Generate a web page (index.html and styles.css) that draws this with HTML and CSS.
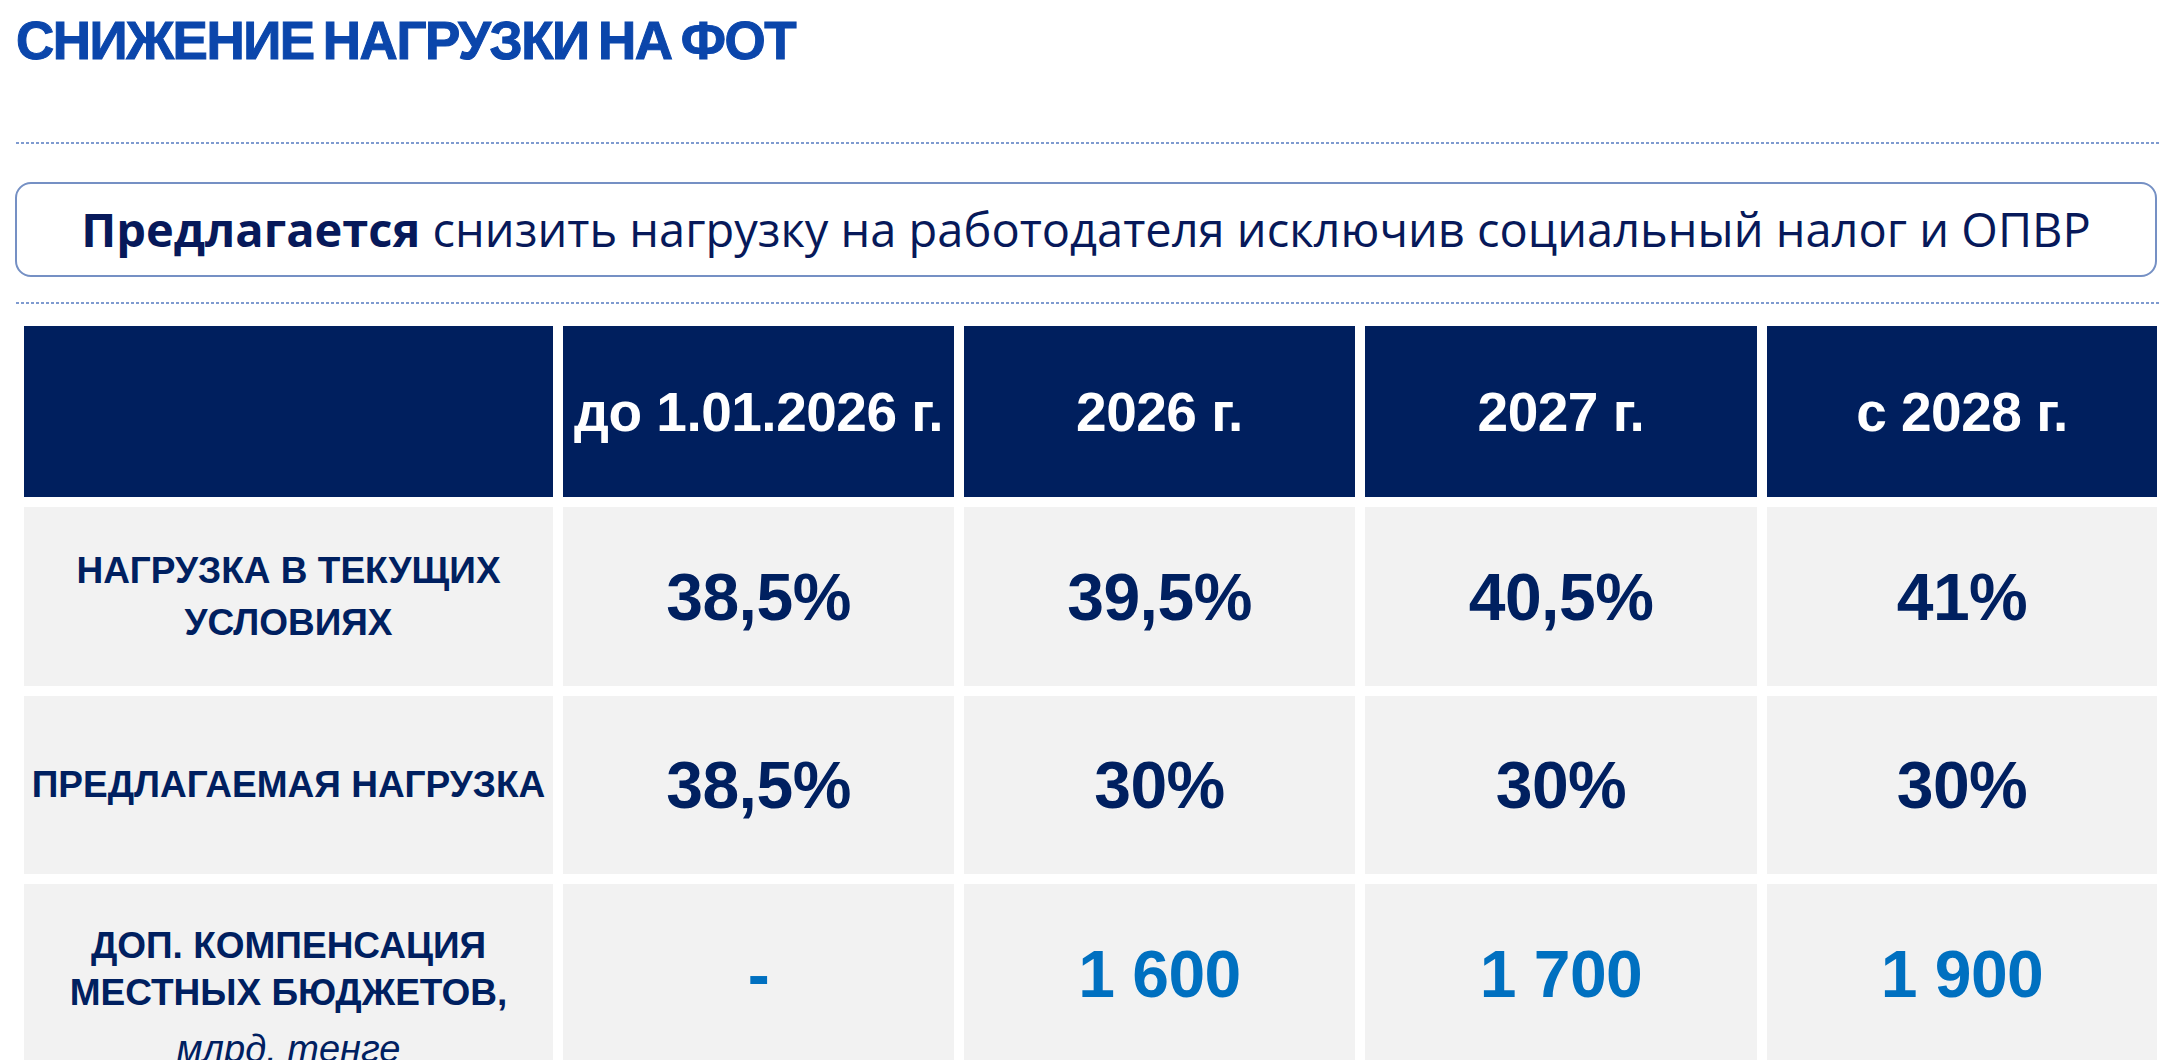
FILE: index.html
```html
<!DOCTYPE html>
<html lang="ru">
<head>
<meta charset="utf-8">
<title>Снижение нагрузки на ФОТ</title>
<link rel="stylesheet" href="styles.css">
</head>
<body>
<div class="slide">
  <h1 class="title">СНИЖЕНИЕ НАГРУЗКИ НА ФОТ</h1>
  <div class="rule rule-top"></div>
  <div class="callout">
    <p class="callout-text"><b>Предлагается</b> снизить нагрузку на работодателя исключив социальный налог и ОПВР</p>
  </div>
  <div class="rule rule-bottom"></div>
  <div class="grid">
    <div class="cell head"></div>
    <div class="cell head"><span class="head-text">до 1.01.2026 г.</span></div>
    <div class="cell head"><span class="head-text">2026 г.</span></div>
    <div class="cell head"><span class="head-text">2027 г.</span></div>
    <div class="cell head"><span class="head-text">с 2028 г.</span></div>

    <div class="cell label"><span class="label-text lh52">НАГРУЗКА В ТЕКУЩИХ<br>УСЛОВИЯХ</span></div>
    <div class="cell value">38,5%</div>
    <div class="cell value">39,5%</div>
    <div class="cell value">40,5%</div>
    <div class="cell value">41%</div>

    <div class="cell label"><span class="label-text nowrap">ПРЕДЛАГАЕМАЯ НАГРУЗКА</span></div>
    <div class="cell value">38,5%</div>
    <div class="cell value">30%</div>
    <div class="cell value">30%</div>
    <div class="cell value">30%</div>

    <div class="cell label label-top"><span class="label-text lh47">ДОП. КОМПЕНСАЦИЯ<br>МЕСТНЫХ БЮДЖЕТОВ,</span><span class="unit">млрд. тенге</span></div>
    <div class="cell value accent">-</div>
    <div class="cell value accent">1 600</div>
    <div class="cell value accent">1 700</div>
    <div class="cell value accent">1 900</div>
  </div>
</div>
</body>
</html>
```
FILE: styles.css
```css
html, body {
  margin: 0;
  padding: 0;
  background: #ffffff;
}
body {
  width: 2160px;
  height: 1060px;
  overflow: hidden;
}
.slide {
  display: flex;
  flex-direction: column;
  font-family: "Liberation Sans", Arial, sans-serif;
}
.title {
  margin: 14px 0 0 16px;
  height: 53px;
  font-size: 53px;
  line-height: 53px;
  font-weight: 700;
  color: #0b46ab;
  -webkit-text-stroke: 1px #0b46ab;
  letter-spacing: -1.5px;
  word-spacing: -4px;
  white-space: nowrap;
}
.rule {
  height: 2px;
  margin-left: 16px;
  background-image: repeating-linear-gradient(to right, #7f9bd0 0 3px, transparent 3px 5px);
}
.rule-top { margin-top: 75px; }
.rule-bottom { margin-top: 25px; }
.callout {
  box-sizing: border-box;
  margin: 38px 0 0 15px;
  width: 2142px;
  height: 95px;
  border: 2px solid #7590c4;
  border-radius: 16px;
  display: flex;
  align-items: center;
  justify-content: center;
}
.callout-text {
  margin: 0;
  font-family: "Open Sans", "Noto Sans", sans-serif;
  font-size: 47px;
  line-height: 1;
  color: #07195a;
  white-space: nowrap;
}
.callout-text b { font-weight: 700; }
.grid {
  margin: 22px 0 0 24px;
  display: grid;
  grid-template-columns: 529px 391px 391px 392px 390px;
  grid-template-rows: 171px 179px 178px 180px;
  gap: 10px;
}
.cell {
  background: #f2f2f2;
  display: flex;
  align-items: center;
  justify-content: center;
  text-align: center;
  color: #002060;
  font-weight: 700;
}
.cell.head {
  background: #001f5e;
  color: #ffffff;
  font-size: 55px;
  white-space: nowrap;
}
.head-text { letter-spacing: -0.5px; }
.value {
  font-size: 66px;
  letter-spacing: -0.5px;
}
.value.accent { color: #0070c0; }
.label {
  flex-direction: column;
  font-size: 37px;
}
.label-text { display: block; }
.lh52 { line-height: 52px; }
.lh47 { line-height: 47px; }
.nowrap { white-space: nowrap; }
.label-top {
  justify-content: flex-start;
  padding-top: 38px;
}
.unit {
  display: block;
  margin-top: 10px;
  font-size: 38px;
  line-height: 47px;
  font-style: italic;
  font-weight: 400;
}
```
